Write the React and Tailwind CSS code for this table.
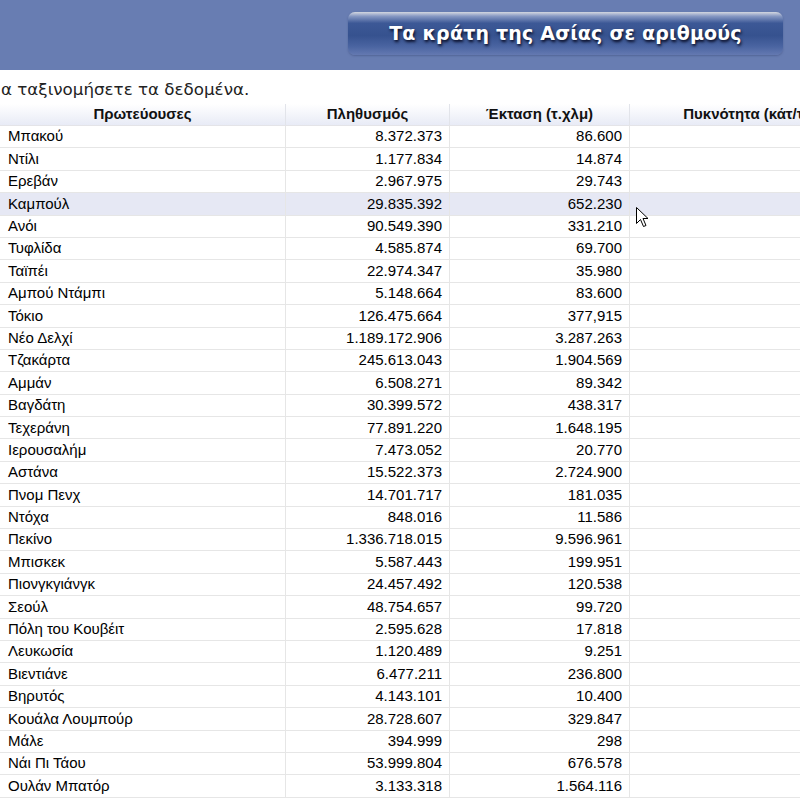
import React from 'react';

const rows = [
    ['Μπακού', '8.372.373', '86.600'],
    ['Ντίλι', '1.177.834', '14.874'],
    ['Ερεβάν', '2.967.975', '29.743'],
    ['Καμπούλ', '29.835.392', '652.230'],
    ['Ανόι', '90.549.390', '331.210'],
    ['Τυφλίδα', '4.585.874', '69.700'],
    ['Ταϊπέι', '22.974.347', '35.980'],
    ['Αμπού Ντάμπι', '5.148.664', '83.600'],
    ['Τόκιο', '126.475.664', '377,915'],
    ['Νέο Δελχί', '1.189.172.906', '3.287.263'],
    ['Τζακάρτα', '245.613.043', '1.904.569'],
    ['Αμμάν', '6.508.271', '89.342'],
    ['Βαγδάτη', '30.399.572', '438.317'],
    ['Τεχεράνη', '77.891.220', '1.648.195'],
    ['Ιερουσαλήμ', '7.473.052', '20.770'],
    ['Αστάνα', '15.522.373', '2.724.900'],
    ['Πνομ Πενχ', '14.701.717', '181.035'],
    ['Ντόχα', '848.016', '11.586'],
    ['Πεκίνο', '1.336.718.015', '9.596.961'],
    ['Μπισκεκ', '5.587.443', '199.951'],
    ['Πιονγκγιάνγκ', '24.457.492', '120.538'],
    ['Σεούλ', '48.754.657', '99.720'],
    ['Πόλη του Κουβέιτ', '2.595.628', '17.818'],
    ['Λευκωσία', '1.120.489', '9.251'],
    ['Βιεντιάνε', '6.477.211', '236.800'],
    ['Βηρυτός', '4.143.101', '10.400'],
    ['Κουάλα Λουμπούρ', '28.728.607', '329.847'],
    ['Μάλε', '394.999', '298'],
    ['Νάι Πι Τάου', '53.999.804', '676.578'],
    ['Ουλάν Μπατόρ', '3.133.318', '1.564.116'],
];

function App() {
    return (
        <div className="relative h-[800px] w-[800px] overflow-hidden bg-white font-['Liberation_Sans',Arial,sans-serif] text-black">
            <header className="flex h-[70px] items-start justify-end bg-[#687db2] pr-[17px] pt-[12px]">
                <div className="flex h-[43px] w-[435px] items-center justify-center rounded-[7px] bg-[linear-gradient(to_bottom,#d3d7e0_0%,#8597c2_10%,#3c5896_26%,#36528f_55%,#4a64a1_80%,#6479b1_100%)] shadow-[0_1px_2px_rgba(40,55,100,0.35)]">
                    <span className="font-['DejaVu_Sans',Verdana,sans-serif] text-[19px] font-bold tracking-[0.2px] text-white [text-shadow:1px_2px_3px_rgba(0,0,20,0.9)]">
                        Τα κράτη της Ασίας σε αριθμούς
                    </span>
                </div>
            </header>

            <p className="flex h-[34px] items-end pb-[5px] pl-[1px] font-['DejaVu_Sans',Verdana,sans-serif] text-[16.7px] leading-5 text-[#222]">
                α ταξινομήσετε τα δεδομένα.
            </p>

            <div className="w-[892px]">
                <div className="flex h-[22px] border-b border-[#e4e4e8] bg-[linear-gradient(to_bottom,#ffffff,#e8ebf6)] text-[15px] font-bold text-[#111]">
                    <div className="flex w-[286px] items-center justify-center border-r border-[#e2e4ea]">Πρωτεύουσες</div>
                    <div className="flex w-[164px] items-center justify-center border-r border-[#e2e4ea]">Πληθυσμός</div>
                    <div className="flex w-[180px] items-center justify-center border-r border-[#e2e4ea]">Έκταση (τ.χλμ)</div>
                    <div className="flex w-[262px] items-center justify-center whitespace-nowrap">Πυκνότητα (κάτ/τ.χλμ)</div>
                </div>

                {rows.map(([city, pop, area], i) => (
                    <div
                        key={city}
                        className={`flex h-[22.4px] border-b border-[#e6e6e6] text-[15px] ${i === 3 ? 'bg-[#e6e8f4]' : 'bg-white'}`}
                    >
                        <div className="flex w-[286px] items-center border-r border-[#e6e6e6] pl-[8px]">{city}</div>
                        <div className="flex w-[164px] items-center justify-end border-r border-[#e6e6e6] pr-[7px]">{pop}</div>
                        <div className="flex w-[180px] items-center justify-end border-r border-[#e6e6e6] pr-[7px]">{area}</div>
                        <div className="w-[262px]"></div>
                    </div>
                ))}
            </div>

            <svg className="absolute left-[636px] top-[207px]" width="13" height="21" viewBox="0 0 13 21">
                <path d="M0.5 0.5 L0.5 16.5 L4.5 12.5 L7.5 19.5 L10 18.5 L7 11.5 L12 11.5 Z" fill="#fff" stroke="#000" strokeWidth="1" strokeLinejoin="round" />
            </svg>
        </div>
    );
}

export default App;
